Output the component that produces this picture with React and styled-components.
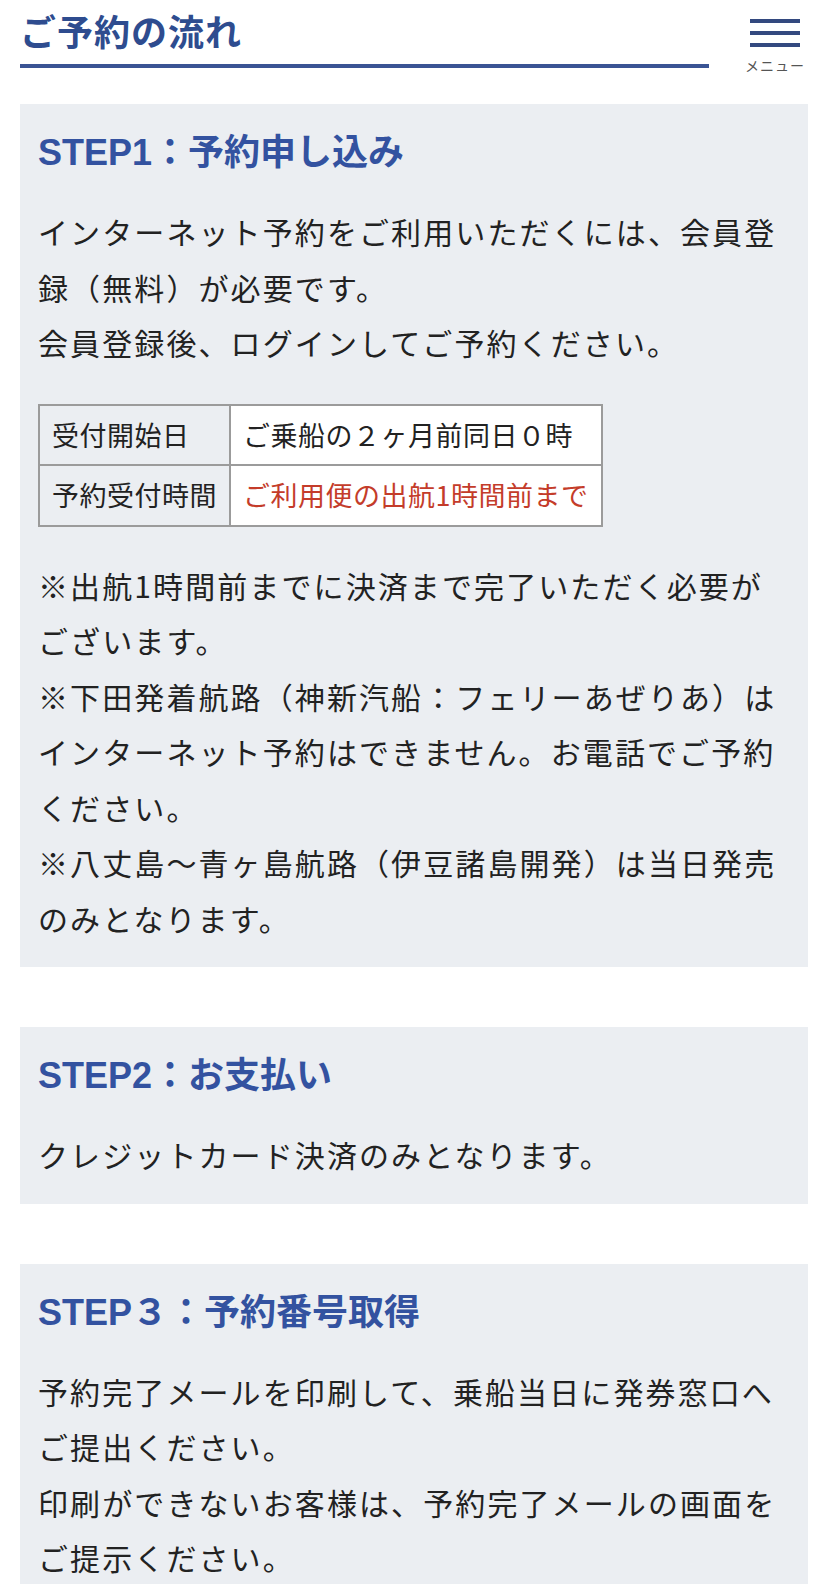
import React from "react";
import styled, { createGlobalStyle } from "styled-components";

const GlobalStyle = createGlobalStyle`
  body {
    margin: 0;
    background: #ffffff;
    font-family: "Noto Sans CJK JP", "Noto Sans", sans-serif;
    color: #222222;
  }
`;

const Header = styled.header`
  display: flex;
  align-items: flex-start;
  gap: 36px;
  padding: 0 23px 0 20px;
`;

const TitleBlock = styled.div`
  flex: 1;
  padding: 8px 0 12px;
  border-bottom: 4px solid #3a5494;
`;

const PageTitle = styled.h1`
  margin: 0;
  font-size: 36px;
  line-height: 44px;
  font-weight: 700;
  color: #2e4c8f;
  letter-spacing: 1px;
`;

const MenuButton = styled.button`
  width: 60px;
  padding: 19px 0 0;
  border: none;
  background: none;
  display: flex;
  flex-direction: column;
  align-items: center;
  gap: 8px;
  cursor: pointer;
`;

const MenuLine = styled.span`
  display: block;
  width: 50px;
  height: 4px;
  background: #33497f;
`;

const MenuLabel = styled.span`
  margin-top: 2px;
  font-family: "Noto Sans CJK JP", sans-serif;
  font-size: 14px;
  line-height: 16px;
  color: #555555;
  letter-spacing: 1px;
`;

const Main = styled.main`
  display: flex;
  flex-direction: column;
  gap: 60px;
  padding: 31px 20px 40px 20px;
`;

const Panel = styled.section`
  background: #ebeef2;
  padding: 23px 18px 21px;
`;

const StepTitle = styled.h2`
  margin: 0 0 26px;
  font-family: "Liberation Sans", "Noto Sans CJK JP", sans-serif;
  font-size: 36px;
  line-height: 51px;
  font-weight: 700;
  color: #3352a0;
`;

const Text = styled.p`
  margin: 0;
  font-size: 30px;
  line-height: 55.5px;
  letter-spacing: 2.1px;
  color: #222222;
`;

const Table = styled.table`
  margin: 33px 0 31px;
  border-collapse: collapse;
  border: 2px solid #9b9b9b;
`;

const Cell = styled.td`
  border: 2px solid #9b9b9b;
  padding: 9px 12px;
  font-size: 27px;
  line-height: 40.5px;
  letter-spacing: 0.5px;
  white-space: nowrap;
  background: ${({ $head }) => ($head ? "#ebeef2" : "#ffffff")};
  color: ${({ $accent }) => ($accent ? "#c43c2a" : "#222222")};
`;

const steps = [
  {
    title: "STEP1：予約申し込み",
    body: (
      <>
        <Text>
          インターネット予約をご利用いただくには、会員登録（無料）が必要です。
          <br />
          会員登録後、ログインしてご予約ください。
        </Text>
        <Table>
          <tbody>
            <tr>
              <Cell $head>受付開始日</Cell>
              <Cell>ご乗船の２ヶ月前同日０時</Cell>
            </tr>
            <tr>
              <Cell $head>予約受付時間</Cell>
              <Cell $accent>ご利用便の出航1時間前まで</Cell>
            </tr>
          </tbody>
        </Table>
        <Text>
          ※出航1時間前までに決済まで完了いただく必要がございます。
          <br />
          ※下田発着航路（神新汽船：フェリーあぜりあ）はインターネット予約はできません。お電話でご予約ください。
          <br />
          ※八丈島〜青ヶ島航路（伊豆諸島開発）は当日発売のみとなります。
        </Text>
      </>
    ),
  },
  {
    title: "STEP2：お支払い",
    body: <Text>クレジットカード決済のみとなります。</Text>,
  },
  {
    title: "STEP３：予約番号取得",
    body: (
      <Text>
        予約完了メールを印刷して、乗船当日に発券窓口へご提出ください。
        <br />
        印刷ができないお客様は、予約完了メールの画面をご提示ください。
      </Text>
    ),
  },
];

export default function App() {
  return (
    <>
      <GlobalStyle />
      <Header>
        <TitleBlock>
          <PageTitle>ご予約の流れ</PageTitle>
        </TitleBlock>
        <MenuButton aria-label="メニュー">
          <MenuLine />
          <MenuLine />
          <MenuLine />
          <MenuLabel>メニュー</MenuLabel>
        </MenuButton>
      </Header>
      <Main>
        {steps.map((step) => (
          <Panel key={step.title}>
            <StepTitle>{step.title}</StepTitle>
            {step.body}
          </Panel>
        ))}
      </Main>
    </>
  );
}
